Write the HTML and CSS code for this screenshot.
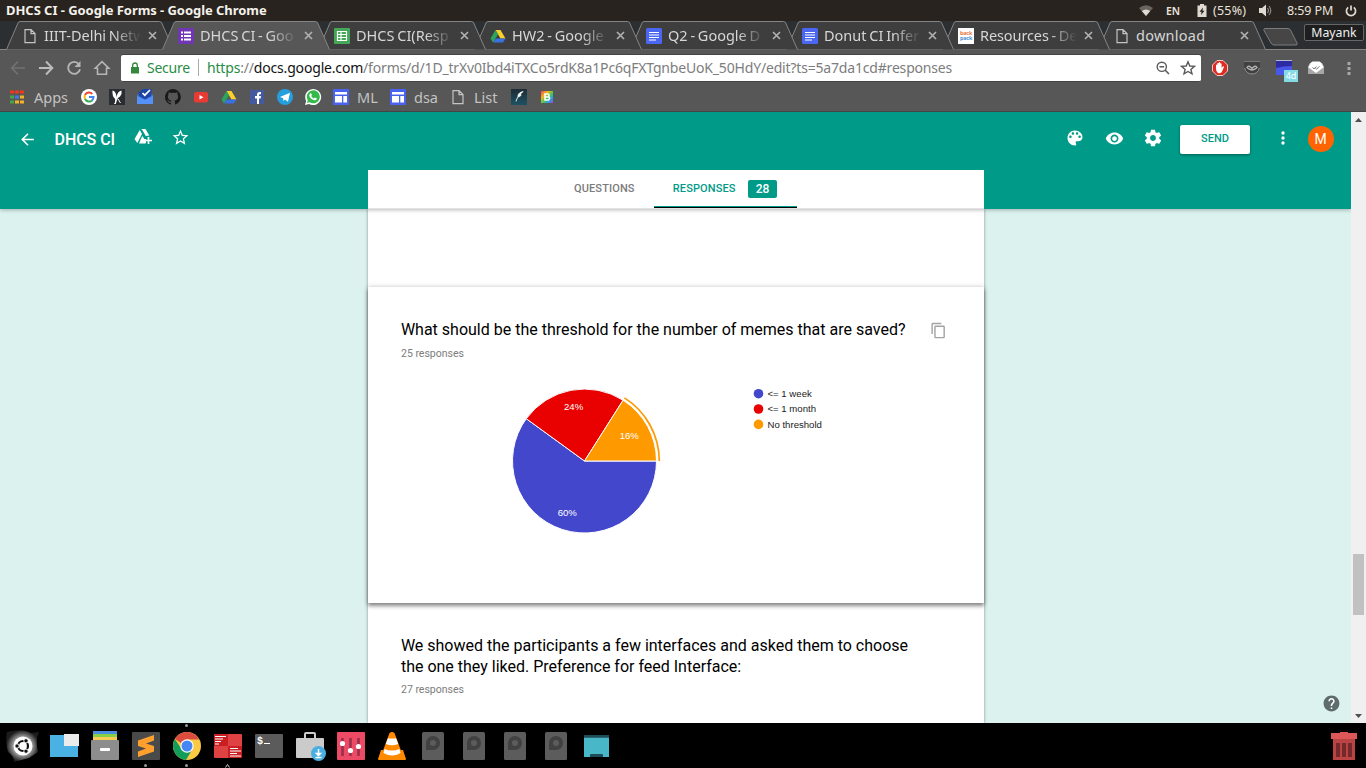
FILE: index.html
```html
<!DOCTYPE html>
<html lang="en">
<head>
<meta charset="utf-8">
<title>DHCS CI - Google Forms</title>
<link rel="stylesheet" href="styles.css">
</head>
<body>
<svg class="defs" width="0" height="0">
  <defs>
    <g id="page" fill="none" stroke="#c4c4c4" stroke-width="1.2"><path d="M3 1.6h6l4 4v9H3zM9 1.6v4h4"/></g>
    <g id="doc"><rect width="16" height="16" rx="1.5" fill="#4b66f0"/><path d="M3 4.500h10M3 7h10M3 9.500h10M3 12h7" stroke="#fff" stroke-width="1.2"/></g>
    <g id="drive"><path d="M5.500 2h5l5 8.500h-5z" fill="#fcd02c"/><path d="M5.500 2l2.600 4.200L3 14.500.5 10.500z" fill="#2ba45c"/><path d="M5.700 10.500h9.800L13 14.500H3z" fill="#3a70e0"/></g>
    <g id="site"><rect width="16" height="16" fill="#4a63ee"/><path d="M2 3h12v2.500H2zM2 7h7v6.500H2zM10.300 7H14v6.500h-3.700z" fill="#fff"/></g>
    <path id="tabshape" d="M.5 28.500L12 2Q12.700.5 14 .5H153.500Q155 .5 155.700 2L167.500 28.500"/>
    <path id="close" d="M1 1l7 7M8 1L1 8" stroke="#b0b0b0" stroke-width="1.700"/>
    <g id="disk"><rect x="3" width="22" height="28" rx="1.500" fill="#5c5c5c"/><path d="M7 18V11a7 7 0 1 1 7 7z" fill="#414141"/><circle cx="14" cy="11" r="3" fill="#5c5c5c"/></g>
  </defs>
</svg>

<header class="sysbar">
  <span class="sys-title">DHCS CI - Google Forms - Google Chrome</span>
  <div class="sys-tray">
    <svg class="wifi" width="14" height="11" viewBox="0 0 14 11"><path d="M0 3Q7-2.500 14 3L7 11z" fill="#68645f"/><path d="M2.800 6Q7 2.800 11.200 6L7 11z" fill="#dfdbd2"/></svg>
    <span class="lang">EN</span>
    <svg class="battery" width="10" height="13" viewBox="0 0 10 13"><path d="M3 0h4v1.500h2.500V13H.5V1.500H3z" fill="#dfdbd2"/><path d="M6 3.500L2.500 7.800h2L4 11l3.500-4.300h-2z" fill="#28231f"/></svg>
    <span class="percent">(55%)</span>
    <svg class="volume" width="13" height="13" viewBox="0 0 13 13"><path d="M0 4h3l4-3.500v12L3 9H0z" fill="#dfdbd2"/><path d="M8.500 4q2 2.500 0 5M10 2q3.500 4.500 0 9" fill="none" stroke="#8a8680" stroke-width="1.200"/></svg>
    <span class="clock">8:59 PM</span>
    <svg class="power" width="12" height="12" viewBox="0 0 12 12"><path d="M3.200 2.300a4.600 4.600 0 1 0 5.600 0M6 .5v5" fill="none" stroke="#dfdbd2" stroke-width="1.700"/></svg>
  </div>
</header>

<nav class="tabstrip">
  <div class="tab t1"><svg class="shape" width="168" height="29"><use href="#tabshape"/></svg><svg class="fav" width="16" height="16"><use href="#page"/></svg><span class="label">IIIT-Delhi Net<i>w</i></span><svg class="x" width="9" height="9"><use href="#close"/></svg></div>
  <div class="tab t2 active"><svg class="shape" width="168" height="29"><use href="#tabshape"/></svg><svg class="fav" width="16" height="16"><rect width="16" height="16" rx="1" fill="#7136b3"/><path d="M3 4.500h2M6 4.500h7M3 8h2M6 8h7M3 11.500h2M6 11.500h7" stroke="#fff" stroke-width="1.900"/></svg><span class="label">DHCS CI - Goo</span><svg class="x" width="9" height="9"><use href="#close"/></svg></div>
  <div class="tab t3"><svg class="shape" width="168" height="29"><use href="#tabshape"/></svg><svg class="fav" width="16" height="16"><rect width="16" height="16" rx="1" fill="#45a858"/><path d="M3.500 3.500h9v9h-9zM3.500 6.500h9M3.500 9.500h9M7 3.500v9" fill="none" stroke="#fff" stroke-width="1.200"/></svg><span class="label">DHCS CI(Resp</span><svg class="x" width="9" height="9"><use href="#close"/></svg></div>
  <div class="tab t4"><svg class="shape" width="168" height="29"><use href="#tabshape"/></svg><svg class="fav" width="16" height="16"><use href="#drive"/></svg><span class="label">HW2 - Google</span><svg class="x" width="9" height="9"><use href="#close"/></svg></div>
  <div class="tab t5"><svg class="shape" width="168" height="29"><use href="#tabshape"/></svg><svg class="fav" width="16" height="16"><use href="#doc"/></svg><span class="label">Q2 - Google D</span><svg class="x" width="9" height="9"><use href="#close"/></svg></div>
  <div class="tab t6"><svg class="shape" width="168" height="29"><use href="#tabshape"/></svg><svg class="fav" width="16" height="16"><use href="#doc"/></svg><span class="label">Donut CI Infer</span><svg class="x" width="9" height="9"><use href="#close"/></svg></div>
  <div class="tab t7"><svg class="shape" width="168" height="29"><use href="#tabshape"/></svg><span class="fav backpack"><b>back</b><i>pack</i></span><span class="label">Resources - De</span><svg class="x" width="9" height="9"><use href="#close"/></svg></div>
  <div class="tab t8"><svg class="shape" width="168" height="29"><use href="#tabshape"/></svg><svg class="fav" width="16" height="16"><use href="#page"/></svg><span class="label">download</span><svg class="x" width="9" height="9"><use href="#close"/></svg></div>
  <svg class="newtab" width="36" height="18" viewBox="0 0 36 18"><path d="M1.500.5H25q2 0 3 2.500l6 12q.8 2-1 2H11q-2 0-3-2L1 2.500Q.5.500 1.500.5z" fill="#464646" stroke="#7c7c7c"/></svg>
  <span class="user">Mayank</span>
</nav>

<div class="toolbar">
  <div class="nav">
    <svg width="16" height="16" viewBox="0 0 16 16"><path d="M15 8H2M8 1.500L1.700 8 8 14.500" fill="none" stroke="#727272" stroke-width="1.700"/></svg>
    <svg width="16" height="16" viewBox="0 0 16 16"><path d="M1 8h13M8 1.500L14.300 8 8 14.500" fill="none" stroke="#bdbdbd" stroke-width="2"/></svg>
    <svg width="16" height="16" viewBox="0 0 16 16"><path d="M12.800 4A6 6 0 1 0 14 9.300" fill="none" stroke="#b5b5b5" stroke-width="1.900"/><path d="M14.500 1v6h-6z" fill="#b5b5b5"/></svg>
    <svg width="16" height="16" viewBox="0 0 16 16"><path d="M1.200 8.300L8 1.700l6.800 6.600h-2.300v6H3.500v-6z" fill="none" stroke="#b5b5b5" stroke-width="1.600"/></svg>
  </div>
  <div class="omnibox">
    <svg class="lock" width="8" height="12" viewBox="0 0 8 12"><path d="M0 5h8v6.500H0z" fill="#37883f"/><path d="M1.700 5V3.300a2.300 2.300 0 0 1 4.600 0V5" fill="none" stroke="#37883f" stroke-width="1.300"/></svg>
    <span class="secure">Secure</span>
    <span class="sep"></span>
    <span class="url"><span class="https">https</span>://<span class="host">docs.google.com</span>/forms/d/1D_trXv0Ibd4iTXCo5rdK8a1Pc6qFXTgnbeUoK_50HdY/edit?ts=5a7da1cd#responses</span>
    <svg class="lens" width="14" height="14" viewBox="0 0 14 14"><circle cx="5.800" cy="5.800" r="4.600" fill="none" stroke="#5a5a5a" stroke-width="1.400"/><path d="M9 9l4 4M3.500 5.800h4.600" stroke="#5a5a5a" stroke-width="1.600"/></svg>
    <svg class="bmstar" width="16" height="16" viewBox="0 0 16 16"><path d="M8 1.700l1.800 4.300 4.700.4-3.600 3 1.100 4.500L8 11.500l-4 2.400 1.100-4.500-3.600-3L6.200 6z" fill="none" stroke="#5a5a5a" stroke-width="1.400"/></svg>
  </div>
  <div class="ext">
    <svg width="16" height="16" viewBox="0 0 16 16"><path d="M5 .5h6L15.500 5v6L11 15.500H5L.5 11V5z" fill="#e02a20" stroke="#f6c8c4"/><path d="M4 8.500V5q.7-.8 1.300 0V3.300q.7-.8 1.400 0v-.8q.8-.8 1.500 0v1q.8-.7 1.400.2V8l1-1.500q1-.5 1.500.2L9.800 12q-1 1.500-3 1.300Q4.300 12.800 4 8.500z" fill="#fff"/></svg>
    <svg width="16" height="16" viewBox="0 0 16 16"><path d="M0 1.500h16V6q0 8.500-8 8.500T0 6z" fill="#404040"/><path d="M0 1.500h16" stroke="#777"/><path d="M.6 8q1.500 6 7.400 6t7.400-6" fill="none" stroke="#999"/><path d="M3 7.500Q4.500 4.500 8 8.500q3.500-4 5-1Q8 12.500 3 7.500z" fill="none" stroke="#b5b5b5" stroke-width="1.300"/></svg>
    <span class="todo"><svg width="16" height="16" viewBox="0 0 16 16"><path d="M0 1h16v14H0z" fill="#4858e8"/><path d="M0 1h16v5L8 6.500 0 8z" fill="#2c2ba4"/><path d="M0 .5h16" stroke="#b8b8cc"/></svg><b>4d</b></span>
    <svg width="16" height="16" viewBox="0 0 16 16"><path d="M0 6L4 2h8l4 4v8H0z" fill="#a7a7a7"/><path d="M2 3.500L4.500 1.500h7L14 3.500l1.500 4L8 13 .5 7.500z" fill="#fff"/><path d="M4.500 7.500L6 8.800 8.500 6.500M7.500 8.500l1 .6L11.500 6.500" fill="none" stroke="#777"/></svg>
    <svg width="4" height="16" viewBox="0 0 4 16" fill="#a8a8a8"><path d="M.5 2h3v3h-3zM.5 7h3v3h-3zM.5 12h3v3h-3z"/></svg>
  </div>
</div>

<div class="bookmarks">
  <svg class="apps" width="14" height="14" viewBox="0 0 14 14"><path d="M0 .5h4v3H0zM5 .5h4v3H5zM10 .5h4v3h-4z" fill="#f2381c"/><path d="M0 5.500h4v3H0z" fill="#41a845"/><path d="M5 5.500h4v3H5z" fill="#3e78e8"/><path d="M10 5.500h4v3h-4zM10 10.500h4v3h-4zM5 10.500h4v3H5z" fill="#f5b325"/><path d="M0 10.500h4v3H0z" fill="#41a845"/></svg>
  <span class="b-apps">Apps</span>
  <svg width="16" height="16"><circle cx="8" cy="8" r="8" fill="#fff"/><g fill="none" stroke-width="2"><path d="M11.300 4.900A4.500 4.500 0 0 0 4 6" stroke="#ea4335"/><path d="M4 6a4.500 4.500 0 0 0 0 4" stroke="#fbbc05"/><path d="M4 10a4.500 4.500 0 0 0 7 1.400" stroke="#34a853"/><path d="M11 11.400A4.500 4.500 0 0 0 12.500 8H8" stroke="#4285f4"/></g></svg>
  <svg width="16" height="16"><rect width="16" height="16" fill="#292d31"/><path d="M3.500 1.500q3 .5 3.800 5l.2 2q1-6.500 5-7 .8 3.500-1.500 6-2.500 1-3 3.500L6.800 15H5q1.500-2.500 1.200-5Q3 7.500 3.500 1.500z" fill="#fff"/><path d="M9 10l2.500 4" stroke="#fff"/></svg>
  <svg width="16" height="16"><path d="M0 6.500L3 3h10l3 3.500V15H0z" fill="#4285f4"/><path d="M1.500 3.500L6 0h8.500v7L8 10.500 1.500 7z" fill="#1e46a4"/><path d="M5.500 4l2.300 2.200L13 1" fill="none" stroke="#fff" stroke-width="1.700"/><path d="M0 7l8 4 8-4v8H0z" fill="#5591f7"/></svg>
  <svg width="16" height="16"><path d="M8 0a8 8 0 0 0-2.500 15.600c.4.100.5-.2.500-.4v-1.500c-2.200.5-2.700-1-2.700-1-.4-.9-.9-1.200-.9-1.200-.7-.5.100-.5.100-.5.800.100 1.200.8 1.200.8.700 1.200 1.900.9 2.300.7.100-.5.300-.9.500-1.100-1.800-.2-3.600-.9-3.600-4 0-.9.300-1.600.8-2.100-.1-.2-.4-1 .1-2.100 0 0 .7-.2 2.200.8a7.500 7.500 0 0 1 4 0c1.500-1 2.200-.8 2.200-.8.500 1.100.2 1.900.1 2.100.5.500.8 1.200.8 2.100 0 3.100-1.900 3.800-3.700 4 .300.300.6.700.6 1.500v2.200c0 .2.100.5.600.4A8 8 0 0 0 8 0z" fill="#191919"/></svg>
  <svg width="16" height="16"><rect x="1" y="3" width="14" height="10.500" rx="2" fill="#e83b34"/><path d="M6.500 6v4.500l4-2.200z" fill="#fff"/></svg>
  <svg width="16" height="16"><use href="#drive"/></svg>
  <svg width="16" height="16"><rect x="1" y="1" width="14" height="14" fill="#4459a0"/><path d="M8 15V9.500H6V7h2V5.500Q8 3 10.500 3H12v2.200h-1q-1 0-1 .9V7h2l-.3 2.500H10V15z" fill="#fff"/></svg>
  <svg width="16" height="16"><circle cx="8" cy="8" r="8" fill="#249fdd"/><path d="M3 8l10-4.300-2 9-3-2.300-1.500 1.500-.3-2.700z" fill="#fff"/></svg>
  <svg width="16" height="16"><path d="M0 16l1.200-4A8 8 0 1 1 4 14.900z" fill="#fff"/><path d="M2 14l.8-2.700a6.500 6.500 0 1 1 2 2z" fill="#35b94b"/><path d="M5 4.500q1-1 1.700.8l.2.800-.7.900q1 1.800 2.700 2.400l1-1 2 1q-.4 2.300-2.700 1.900-4-1-5-4.800z" fill="#fff"/></svg>
  <svg width="16" height="16"><use href="#site"/></svg>
  <span class="b-ml">ML</span>
  <svg width="16" height="16"><use href="#site"/></svg>
  <span class="b-dsa">dsa</span>
  <svg width="16" height="16"><use href="#page"/></svg>
  <span class="b-list">List</span>
  <svg width="16" height="16"><defs><linearGradient id="ink" x2="0" y2="1"><stop stop-color="#1d2c36"/><stop offset="1" stop-color="#1c5262"/></linearGradient></defs><rect width="16" height="16" fill="url(#ink)"/><path d="M12 2.500Q8 3.500 7 6l.3 2L10 6.500 9.500 5zM7.500 7q-2 3-2.500 5.500" fill="#fff" stroke="#fff" stroke-width=".8"/></svg>
  <svg width="16" height="16"><defs><linearGradient id="rb" x2="1" y2="1"><stop stop-color="#f03c5c"/><stop offset=".3" stop-color="#f6b51d"/><stop offset=".55" stop-color="#4fc653"/><stop offset=".75" stop-color="#26a3e0"/><stop offset="1" stop-color="#b03ce0"/></linearGradient></defs><rect x="2" y="2" width="12" height="12" fill="url(#rb)"/><path d="M6 5h3q1.500.3.800 2.800Q11.500 9 9.500 11H6zM6 8h3.500" fill="none" stroke="#fff" stroke-width="1.600"/></svg>
</div>

<div class="viewport">
  <div class="app">
    <div class="apphead">
      <div class="topline">
        <svg class="back" width="19" height="19" viewBox="0 0 24 24"><path d="M20 11H7.830l5.590-5.590L12 4l-8 8 8 8 1.410-1.410L7.830 13H20v-2z"/></svg>
        <h1>DHCS CI</h1>
        <svg class="adddrive" width="19" height="16" viewBox="0 0 19 16"><path d="M6.500 0h5l3.800 6.600-3.500.5L8 .500zM5.800 1L8 5 3.300 14 .500 10zM8.500 7l1.700 3H12v3.500l-.5 1H5L7.300 9z"/><path d="M14.500 8v7M11 11.500h7" stroke="#fff" stroke-width="1.700"/></svg>
        <svg class="star" width="19" height="19" viewBox="0 0 24 24"><path d="M22 9.240l-7.190-.62L12 2 9.190 8.630 2 9.240l5.460 4.730L5.820 21 12 17.270 18.180 21l-1.630-7.030L22 9.240zM12 15.400l-3.760 2.270 1-4.280-3.320-2.880 4.380-.38L12 6.100l1.710 4.040 4.380.38-3.320 2.880 1 4.280L12 15.400z"/></svg>
        <span class="grow"></span>
        <svg class="palette" width="20" height="20" viewBox="0 0 24 24"><path d="M12 3c-4.970 0-9 4.030-9 9s4.030 9 9 9c.83 0 1.500-.67 1.500-1.500 0-.39-.15-.74-.39-1.010-.23-.26-.38-.61-.38-.99 0-.83.67-1.500 1.500-1.500H16c2.760 0 5-2.240 5-5 0-4.420-4.030-8-9-8zm-5.500 9c-.83 0-1.500-.67-1.500-1.500S5.670 9 6.500 9 8 9.670 8 10.500 7.330 12 6.500 12zm3-4C8.670 8 8 7.330 8 6.500S8.670 5 9.500 5s1.500.67 1.500 1.500S10.330 8 9.500 8zm5 0c-.83 0-1.500-.67-1.500-1.500S13.670 5 14.500 5s1.500.67 1.500 1.500S15.330 8 14.500 8zm3 4c-.83 0-1.500-.67-1.500-1.500S16.670 9 17.500 9s1.500.67 1.500 1.500-.67 1.500-1.500 1.500z"/></svg>
        <svg class="eye" width="19" height="19" viewBox="0 0 24 24"><path d="M12 4.500C7 4.500 2.730 7.610 1 12c1.730 4.390 6 7.500 11 7.500s9.270-3.110 11-7.500c-1.730-4.390-6-7.500-11-7.500zM12 17c-2.760 0-5-2.240-5-5s2.240-5 5-5 5 2.240 5 5-2.240 5-5 5zm0-8c-1.660 0-3 1.340-3 3s1.340 3 3 3 3-1.340 3-3-1.340-3-3-3z"/></svg>
        <svg class="gear" width="20" height="20" viewBox="0 0 24 24"><path d="M19.430 12.980c.04-.32.07-.64.07-.98s-.03-.66-.07-.98l2.110-1.650c.19-.15.24-.42.12-.64l-2-3.460c-.12-.22-.39-.3-.61-.22l-2.490 1c-.52-.4-1.080-.73-1.690-.98l-.38-2.650C14.460 2.180 14.250 2 14 2h-4c-.25 0-.46.18-.49.42l-.38 2.650c-.61.25-1.170.59-1.690.98l-2.490-1c-.23-.09-.49 0-.61.22l-2 3.460c-.13.22-.07.49.12.64l2.110 1.650c-.04.32-.07.65-.07.98s.03.66.07.98l-2.110 1.650c-.19.15-.24.42-.12.64l2 3.460c.12.22.39.3.61.22l2.490-1c.52.4 1.080.73 1.690.98l.38 2.650c.03.24.24.42.49.42h4c.25 0 .46-.18.49-.42l.38-2.650c.61-.25 1.170-.59 1.690-.98l2.490 1c.23.09.49 0 .61-.22l2-3.460c.12-.22.07-.49-.12-.64l-2.110-1.650zM12 15.500c-1.930 0-3.500-1.570-3.500-3.500s1.570-3.500 3.500-3.500 3.500 1.570 3.500 3.500-1.570 3.500-3.500 3.500z"/></svg>
        <button class="send">SEND</button>
        <svg class="more" width="4" height="14" viewBox="0 0 4 14"><circle cx="2" cy="2" r="1.700"/><circle cx="2" cy="7" r="1.700"/><circle cx="2" cy="12" r="1.700"/></svg>
        <span class="avatar">M</span>
      </div>
      <div class="formtabs">
        <span class="ft">QUESTIONS</span>
        <span class="ft on">RESPONSES <b>28</b></span>
      </div>
    </div>
    <main class="column">
      <section class="card">
        <div class="qrow">
          <h2>What should be the threshold for the number of memes that are saved?</h2>
          <svg class="copy" width="17" height="17" viewBox="0 0 24 24"><path fill="#a3a3a3" d="M16 1H4c-1.100 0-2 .9-2 2v14h2V3h12V1zm3 4H8c-1.100 0-2 .9-2 2v14c0 1.100.9 2 2 2h11c1.100 0 2-.9 2-2V7c0-1.100-.9-2-2-2zm0 16H8V7h11v14z"/></svg>
        </div>
        <p class="count">25 responses</p>
        <svg class="chart" width="550" height="170" viewBox="401 375 550 170">
          <g stroke="#fff" stroke-width="1">
            <path d="M584.500 461H656.500A72 72 0 1 1 526.250 418.680z" fill="#4347cc"/>
            <path d="M584.500 461L526.250 418.680A72 72 0 0 1 623.080 400.210z" fill="#e90000"/>
            <path d="M584.500 461L623.080 400.210A72 72 0 0 1 656.500 461z" fill="#ff9900"/>
          </g>
          <path d="M624.500 397.900A74.800 74.800 0 0 1 659.300 461" fill="none" stroke="#ff9900" stroke-width="1.700"/>
          <g class="pct"><text x="564" y="410">24%</text><text x="619.700" y="439">16%</text><text x="557.700" y="516">60%</text></g>
          <circle cx="758.500" cy="393.700" r="4.800" fill="#4347cc"/><circle cx="758.500" cy="409" r="4.800" fill="#e90000"/><circle cx="758.500" cy="424.400" r="4.800" fill="#ff9900"/>
          <g class="leg"><text x="767.500" y="397">&lt;= 1 week</text><text x="767.500" y="412">&lt;= 1 month</text><text x="767.500" y="428">No threshold</text></g>
        </svg>
      </section>
      <section class="next">
        <h2>We showed the participants a few interfaces and asked them to choose<br>the one they liked. Preference for feed Interface:</h2>
        <p class="count">27 responses</p>
      </section>
    </main>
    <svg class="help" width="19" height="19" viewBox="0 0 24 24"><circle cx="12" cy="12" r="7" fill="#fff"/><path fill="#5e6d6b" d="M12 2C6.480 2 2 6.480 2 12s4.480 10 10 10 10-4.480 10-10S17.520 2 12 2zm1 17h-2v-2h2v2zm2.070-7.750l-.9.920C13.450 12.900 13 13.500 13 15h-2v-.5c0-1.100.45-2.100 1.170-2.830l1.240-1.260c.37-.36.59-.86.59-1.410 0-1.100-.9-2-2-2s-2 .9-2 2H8c0-2.210 1.790-4 4-4s4 1.790 4 4c0 .88-.36 1.680-.93 2.250z"/></svg>
  </div>
  <div class="scroll">
    <svg width="7" height="4"><path d="M0 4L3.500 0 7 4z" fill="#505050"/></svg>
    <span class="thumb"></span>
    <svg width="7" height="4"><path d="M0 0h7L3.500 4z" fill="#505050"/></svg>
  </div>
</div>

<footer class="launcher">
  <svg width="28" height="28" viewBox="0 0 28 28"><defs><radialGradient id="dash"><stop offset=".5" stop-color="#b4b4b4"/><stop offset="1" stop-color="#1c1c1c"/></radialGradient></defs><path d="M-2 0Q14-4 22 1L30 0Q26 9 29 20L20 26 5 30Q5 24-1 20-4 10-2 0z" fill="url(#dash)"/><circle cx="14" cy="14" r="9.500" fill="#fff"/><circle cx="14" cy="14" r="5" fill="none" stroke="#111" stroke-width="2.200"/><g fill="#111" stroke="#fff"><circle cx="8" cy="14" r="2.200"/><circle cx="17" cy="8.800" r="2.200"/><circle cx="17" cy="19.200" r="2.200"/></g></svg>
  <svg width="30" height="28" viewBox="0 0 30 28"><path d="M0 3h28v22H0z" fill="#49b1e3"/><path d="M14 2h15v12H14z" fill="#ebebeb"/></svg>
  <svg class="files" width="28" height="28" viewBox="0 0 28 28"><path d="M2-1h24v3H2z" fill="#4a8ce0"/><path d="M2 2h24v3H2z" fill="#86cf48"/><path d="M2 5h24v4H2z" fill="#f6cd52"/><rect y="8" width="28" height="20" rx="1" fill="#8d8d8d"/><rect x="9" y="16" width="10" height="3" rx="1" fill="#fff"/></svg>
  <svg width="28" height="28" viewBox="0 0 28 28"><rect width="28" height="28" rx="1" fill="#4a4a4a"/><path d="M6 8.500L22 3v5.500l-8 3 8 2.500v5.500L6 25v-5.500l8-3-8-2.500z" fill="#ff9f2e"/></svg>
  <svg width="28" height="28" viewBox="0 0 28 28"><circle cx="14" cy="14" r="14" fill="#fbc944"/><path d="M1.900 7A14 14 0 0 0 13 28l6.500-11-5.500-3-5.500 3z" fill="#139d5a"/><path d="M14 0a14 14 0 0 1 12.100 7.500H14L8 11 2 7A14 14 0 0 1 14 0z" fill="#db4c3f"/><circle cx="14" cy="14" r="6.700" fill="#fff"/><circle cx="14" cy="14" r="5.500" fill="#4687f4"/></svg>
  <svg width="28" height="28" viewBox="0 0 28 28"><rect y="2" width="28" height="24" rx="1" fill="#df4242"/><path d="M0 2h14v12H0z" fill="#c91f22"/><path d="M14 14h14v12H14z" fill="#c91f22"/><path d="M1 4.500h11M1 7h8M1 9.500h6M1 12h4M16 16.500h8M16 19h11M16 21.500h7M16 24h11" stroke="#fff" stroke-width="1.200"/></svg>
  <svg width="28" height="28" viewBox="0 0 28 28"><rect y="2" width="28" height="24" rx="1" fill="#5b5b5b"/><text x="2" y="12" class="prompt">$</text><path d="M9 11.500h6" stroke="#fff"/></svg>
  <svg width="30" height="30" viewBox="0 0 30 30"><path d="M9 7V3q0-1 1-1h8q1 0 1 1v4" fill="none" stroke="#ccc" stroke-width="2"/><rect y="7" width="28" height="20" rx="1" fill="#cbcbcb"/><circle cx="22.500" cy="22.500" r="7.500" fill="#4aafe0"/><path d="M22.500 18v5M20.500 22.500l2 2 2-2zM19.500 26.500h6" fill="#fff" stroke="#fff" stroke-width="1.500"/></svg>
  <svg width="28" height="28" viewBox="0 0 28 28"><rect width="28" height="28" rx="1" fill="#ec4a65"/><path d="M5.500 6v18M13.500 6v18M21.500 6v18" stroke="#98304a" stroke-width="2.600"/><g fill="#fff"><circle cx="5.500" cy="11.500" r="2.600"/><circle cx="13.500" cy="18.500" r="2.600"/><circle cx="21.500" cy="14.500" r="2.600"/></g></svg>
  <svg width="28" height="28" viewBox="0 0 28 28"><path d="M11.500 1q2.500-2 5 0l7 19H4.500z" fill="#ff8a00"/><path d="M9.800 6.500h8.400l2 5.500q-6 2.500-12.400 0z" fill="#fff"/><path d="M3 18h22l3 9q0 1-1 1H1q-1 0-1-1z" fill="#ff8a00"/><path d="M6.500 17q7.500 3 15 0l1 4q-8 5-17 0z" fill="#fff"/></svg>
  <svg width="28" height="28"><use href="#disk"/></svg>
  <svg width="28" height="28"><use href="#disk"/></svg>
  <svg width="28" height="28"><use href="#disk"/></svg>
  <svg width="28" height="28"><use href="#disk"/></svg>
  <svg width="28" height="28" viewBox="0 0 28 28"><rect x="1" y="3" width="25" height="22" fill="#48b8c8"/><path d="M1 3h25v2.800h-25zM8 22h11q1 0 1 1v2H7v-2q0-1 1-1z" fill="#1f4d57"/></svg>
  <span class="grow"></span>
  <svg class="trash" width="26" height="28" viewBox="0 0 26 28"><path d="M2 7h22v21H2z" fill="#bb4343"/><path d="M0 1h9V0h8v1h9v6H0z" fill="#dc5858"/><path d="M5 11h4v14H5zM11 11h4v14h-4zM17 11h4v14h-4z" fill="#742a2a"/></svg>
  <i class="pip p1"></i><i class="pip p2"></i><i class="pip p3"></i><svg class="pip p4" width="5" height="4"><path d="M.5 3.500l2-3 2 3" fill="none" stroke="#ccc"/></svg>
</footer>
</body>
</html>
```
FILE: styles.css
```css
* { box-sizing: border-box; }
body { margin: 0; width: 1366px; height: 768px; overflow: hidden; display: flex; flex-direction: column; font-family: Roboto, "Liberation Sans", sans-serif; }
svg { display: block; flex: none; overflow: visible; }
.defs { position: absolute; }
.grow { flex: 1; }

/* system bar */
.sysbar, .tabstrip, .toolbar, .bookmarks { font-family: "Noto Sans", "Open Sans", sans-serif; white-space: nowrap; }
.sysbar { height: 21px; flex: none; display: flex; align-items: center; justify-content: space-between; padding: 0 9px 0 6px; background: #28231f; color: #e8e4dc; font-size: 12.500px; }
.sys-title { font-weight: 700; font-size: 13px; color: #f4f1ea; letter-spacing: -.05px; margin-top: -1px; }
.sys-tray { display: flex; align-items: center; }
.lang { font-size: 10.500px; font-weight: 600; margin-left: 13px; width: 15px; }
.battery { margin-left: 16px; }
.percent { margin-left: 6px; width: 36px; letter-spacing: .2px; }
.volume { margin-left: 10px; }
.clock { margin-left: 15px; width: 47px; letter-spacing: -.1px; }
.power { margin-left: 11px; }

/* tab strip */
.tabstrip { height: 29px; flex: none; display: flex; background: #2b2f32; padding-left: 6px; position: relative; box-shadow: inset 0 -1px #858585; }
.tab { position: relative; flex: none; width: 168px; height: 29px; margin-right: -12px; display: flex; align-items: center; padding-left: 16px; }
.tab .shape { position: absolute; left: 0; top: 0; fill: #3e3e3e; stroke: #858585; }
.tab.active .shape { fill: #575757; }
.tab.active::after { content: ""; position: absolute; left: 1px; right: 1px; bottom: 0; height: 1px; background: #575757; }
.fav, .x, .label { position: relative; flex: none; }
.fav { margin-right: 6px; }
.label { width: 97px; height: 22px; line-height: 21px; font-size: 14.500px; word-spacing: -1px; color: #d6d6d6; overflow: hidden; -webkit-mask-image: linear-gradient(90deg, #000 72%, transparent 100%); mask-image: linear-gradient(90deg, #000 72%, transparent 100%); }
.label i { font-style: normal; }
.t8 .label { -webkit-mask-image: none; mask-image: none; letter-spacing: .25px; }
.x { margin-left: 6.500px; }
.t1 { z-index: 1; } .t2 { z-index: 9; } .t3 { z-index: 8; } .t4 { z-index: 7; } .t5 { z-index: 6; } .t6 { z-index: 5; } .t7 { z-index: 4; } .t8 { z-index: 3; }
.t7 .label { letter-spacing: -.1px; }
.backpack { width: 16px; height: 16px; background: #fff; font-size: 5.500px; line-height: 5px; padding-top: 3px; text-align: center; letter-spacing: -.2px; }
.backpack b, .backpack i { display: block; font-style: normal; font-weight: 700; color: #e8763c; }
.backpack i { color: #4b8fd0; }
.newtab { margin: 7px 0 0 9px; }
.user { flex: none; margin: 3px 0 0 5px; width: 60px; height: 17px; line-height: 15px; border: 1px solid #666; border-radius: 2px; background: #1e1e1e; color: #f0f0f0; font-size: 12.300px; text-align: center; }

/* toolbar */
.toolbar { height: 36px; flex: none; background: #575757; display: flex; align-items: center; padding-left: 10px; }
.nav { display: flex; gap: 12px; width: 111px; }
.omnibox { width: 1080px; height: 27px; background: #fff; border-radius: 2px; border-bottom: 1px solid #444; display: flex; align-items: center; padding-left: 10px; font-size: 14px; color: #7d7d7d; box-shadow: 0 -1px #444; }
.secure { color: #2a8d45; margin-left: 8px; width: 43px; letter-spacing: -.25px; }
.sep { width: 1px; height: 17px; background: #aaa; margin: 0 8px 0 8px; }
.url { width: 949px; letter-spacing: -.18px; }
.https { color: #2a8d45; } .host { color: #111; }
.bmstar { margin-left: 10px; }
.ext { display: flex; gap: 16px; margin-left: 11px; }
.ext > :last-child { margin-left: 7px; }
.todo { position: relative; }
.todo b { position: absolute; left: 8px; top: 10px; width: 14px; height: 12px; line-height: 11px; background: #84dbe6; color: #fff; font-size: 9px; font-weight: 400; text-align: center; }

/* bookmarks */
.bookmarks { height: 26px; flex: none; display: flex; align-items: center; gap: 12px; padding: 0 0 5px 10px; background: #575757; color: #c3c3c3; font-size: 14.500px; box-shadow: inset 0 -1px #444; }
.bookmarks span { margin-left: -4px; }
.b-apps { width: 35px; } .b-ml { width: 21px; } .b-dsa { width: 24px; } .b-list { width: 25px; }
.bookmarks .apps { margin-right: 2px; }

/* page */
.viewport { height: 611px; display: flex; flex: none; }
.app { width: 1351px; position: relative; background: #dcf2ef; display: flex; flex-direction: column; align-items: center; overflow: hidden; }
.apphead { width: 100%; height: 97px; flex: none; background: #009b88; position: relative; z-index: 2; display: flex; flex-direction: column; align-items: center; box-shadow: 0 1px 4px rgba(0,0,0,.28); }
.topline { width: 100%; height: 58px; display: flex; align-items: center; padding: 0 17.500px 6px 18px; fill: #fff; color: #fff; }
.back { margin-top: 2px; }
h1 { margin: 2px 0 0 17.500px; width: 61px; font-size: 16px; font-weight: 500; letter-spacing: -.05px; white-space: nowrap; }
.adddrive { margin: -2px 0 0 18px; }
.star { margin: -1px 0 0 18px; }
.palette { margin-top: -1px; }
.eye { margin-left: 20px; }
.gear { margin-left: 18.500px; }
.send { margin: 2px 0 0 17.500px; width: 70px; height: 29px; border: 0; border-radius: 2px; background: #fff; color: #009b88; font: 500 11px Roboto, sans-serif; padding: 0 0 2px; box-shadow: 0 1px 3px rgba(0,0,0,.4); }
.more { margin: -1px 0 0 30.500px; }
.avatar { margin: 2px 0 0 23px; width: 26px; height: 26px; border-radius: 50%; background: #ff6400; text-align: center; font-size: 14px; line-height: 27px; }
.formtabs { width: 616px; height: 39px; background: #fff; border-bottom: 1px solid #e3e3e3; display: flex; padding-left: 186px; }
.ft { height: 38px; width: 100px; padding-left: 20.500px; font-size: 11px; font-weight: 500; line-height: 37px; color: #7c7c7c; letter-spacing: .12px; }
.ft.on { width: 143px; padding-left: 19.300px; color: #009b88; border-bottom: 1px solid #000; box-shadow: inset 0 -1px #009b88; display: flex; align-items: center; }
.ft b { width: 29px; height: 18px; line-height: 18px; margin: 0 0 0 12.500px; border-radius: 2px; background: #009b88; color: #fff; font-weight: 500; font-size: 12px; text-align: center; }
.column { width: 616px; height: 514px; background: #fff; padding-top: 78px; box-shadow: 0 0 3px rgba(0,0,0,.4); }
.card { height: 316px; padding: 32px 33px 0; background: #fff; position: relative; box-shadow: 0 3px 4px rgba(0,0,0,.42), 0 0 5px rgba(0,0,0,.2); }
.qrow { display: flex; justify-content: space-between; }
h2 { margin: 0 0 0 .4px; font-size: 16px; line-height: 21px; font-weight: 400; color: #000; white-space: nowrap; }
.copy { margin: 3px 4px 0 0; }
.count { margin: 7px 0 0 .5px; font-size: 10.600px; line-height: 13px; color: #7d7d7d; letter-spacing: -.05px; }
.next .count { margin-top: 6px; }
.chart { margin-top: 15px; font: 9.600px "Liberation Sans", Arial, sans-serif; }
.pct { fill: #fff; } .leg { fill: #222; }
.next { padding: 32px 33px 0; }
.help { position: absolute; left: 1322px; top: 582px; }
.scroll { width: 15px; background: #f0f0f0; display: flex; flex-direction: column; align-items: center; padding: 6px 0 5px; }
.thumb { width: 11px; height: 61px; margin: 432px 0 99px; background: #c1c1c1; }

/* launcher */
.launcher { height: 45px; flex: none; background: #000; display: flex; align-items: center; padding: 0 9px; position: relative; gap: 13px; }
.launcher > svg[width="30"] { margin-right: -2px; }
.prompt { font: 700 10px "Liberation Mono", monospace; fill: #fff; }
.pip { position: absolute; width: 3px; height: 3px; border-radius: 50%; background: #999; }
.p1 { left: 185px; top: 1px; } .p2 { left: 185px; top: 41px; } .p3 { left: 144px; top: 41px; } .p4 { left: 225px; top: 41px; background: none; border-radius: 0; width: 5px; height: 4px; }
```
